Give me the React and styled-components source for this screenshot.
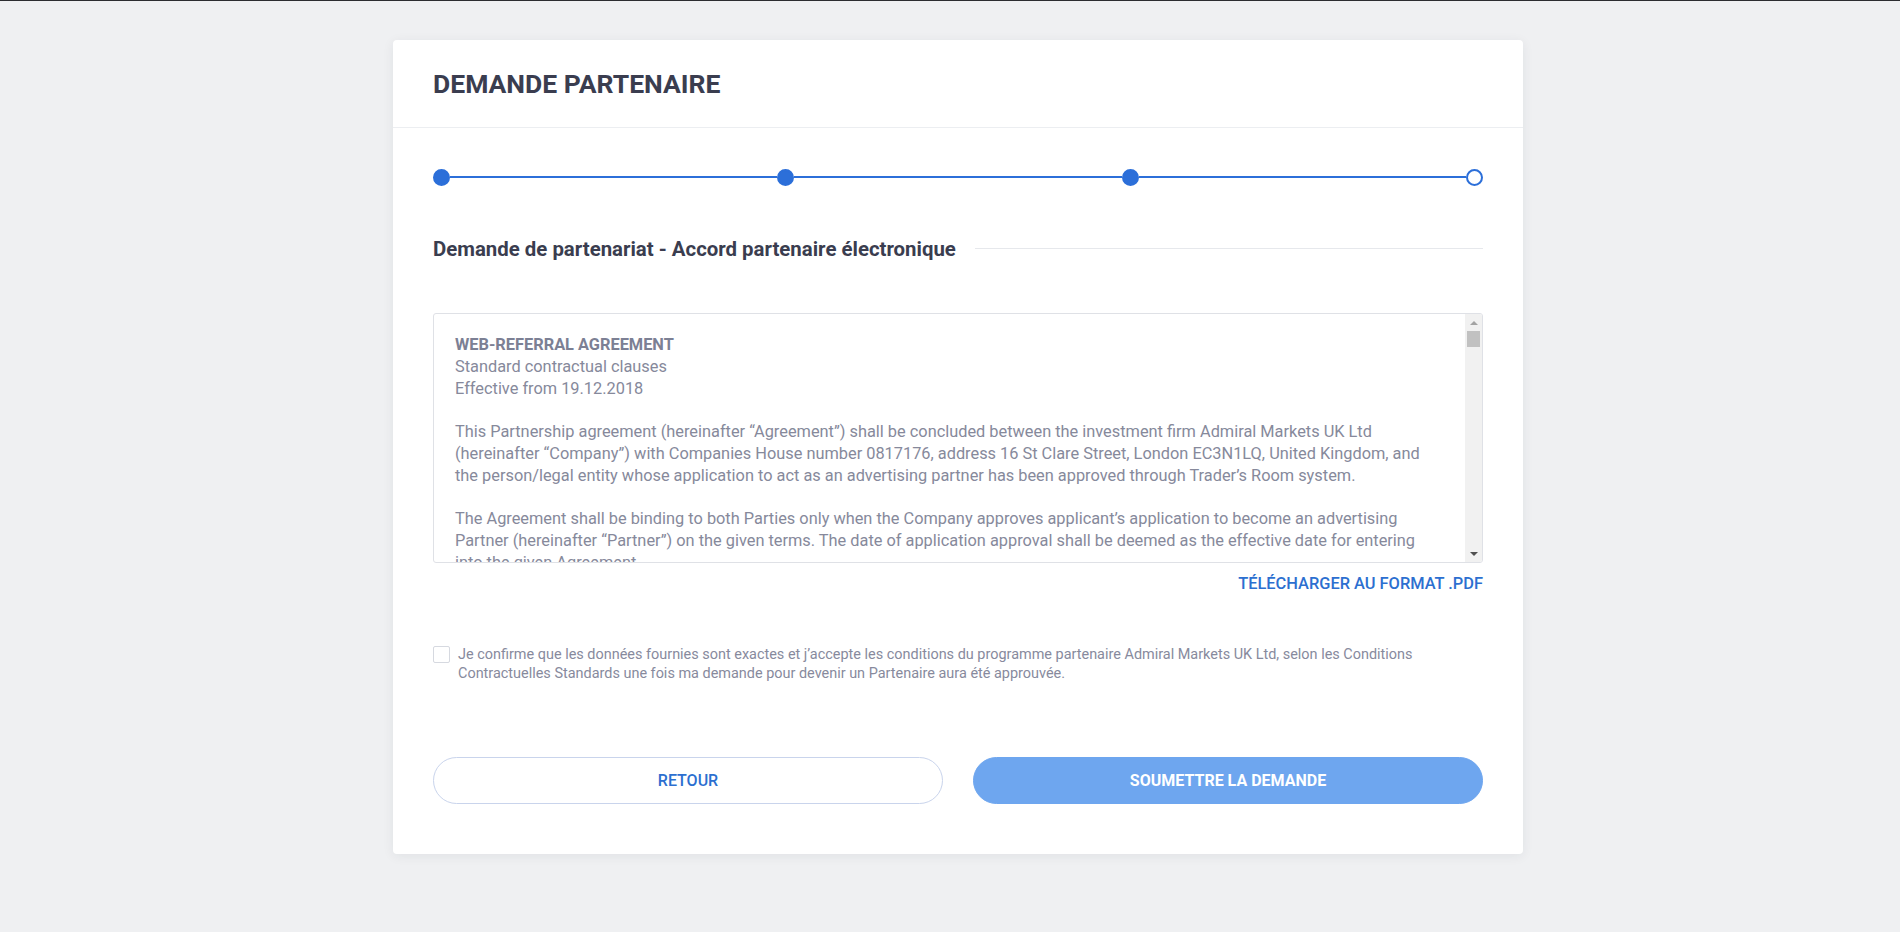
import React, { useEffect, useRef, useState } from "react";
import styled, { createGlobalStyle } from "styled-components";

const GlobalStyle = createGlobalStyle`
  html, body {
    margin: 0;
    padding: 0;
    background: #eff0f2;
    min-height: 100%;
  }
  body {
    font-family: Roboto, "Noto Sans", "Liberation Sans", sans-serif;
    -webkit-font-smoothing: antialiased;
  }
  * { box-sizing: border-box; }
`;

const TopRule = styled.div`
  height: 1px;
  background: #2c2d31;
`;

const Page = styled.main`
  display: flex;
  justify-content: center;
  padding: 39px 0 77px 16px;
`;

const Card = styled.section`
  width: 1130px;
  background: #ffffff;
  border-radius: 4px;
  box-shadow: 0 2px 12px rgba(30, 40, 60, 0.07);
`;

const CardHeader = styled.header`
  height: 88px;
  padding: 0 40px;
  display: flex;
  align-items: center;
  border-bottom: 1px solid #eceef1;
`;

const Title = styled.h1`
  margin: 0;
  font-size: 26.5px;
  font-weight: 700;
  line-height: 32px;
  color: #3a3d4f;
`;

const CardBody = styled.div`
  padding: 40px 40px 50px;
`;

const Stepper = styled.ol`
  list-style: none;
  margin: 0;
  padding: 0;
  height: 18px;
  display: flex;
  align-items: center;
`;

const Dot = styled.li`
  width: 17px;
  height: 17px;
  flex: none;
  border-radius: 50%;
  border: 2px solid #2c6fd9;
  background: ${(p) => (p.$done ? "#2c6fd9" : "#ffffff")};
`;

const Connector = styled.li`
  flex: 1;
  height: 2px;
  background: #2c6fd9;
`;

const SectionHeading = styled.div`
  margin-top: 51px;
  display: flex;
  align-items: center;
  gap: 19px;

  &::after {
    content: "";
    flex: 1;
    height: 1px;
    background: #e6e8ec;
    margin-top: -1px;
  }
`;

const HeadingText = styled.h2`
  margin: 0;
  font-size: 20.4px;
  font-weight: 700;
  line-height: 24px;
  color: #3a3d4f;
`;

const AgreementBox = styled.div`
  margin-top: 52px;
  height: 250px;
  display: flex;
  border: 1px solid #dfe1e6;
  border-radius: 3px;
  overflow: hidden;
`;

const AgreementScroll = styled.div`
  flex: 1;
  min-width: 0;
  overflow-y: scroll;
  scrollbar-width: none;
  padding: 20px 21px;
  font-size: 16.35px;
  line-height: 21.75px;
  color: #86899b;

  &::-webkit-scrollbar {
    display: none;
  }
`;

/* classic scrollbar rail drawn beside the text */
const ScrollRail = styled.div`
  width: 17px;
  flex: none;
  display: flex;
  flex-direction: column;
  background: #f1f1f1;
`;

const ArrowButton = styled.div`
  height: 17px;
  flex: none;
  display: flex;
  align-items: center;
  justify-content: center;

  &::before {
    content: "";
    width: 0;
    height: 0;
    border-left: 4px solid transparent;
    border-right: 4px solid transparent;
    ${(p) =>
      p.$dir === "up"
        ? `border-bottom: 4px solid ${p.$active ? "#505050" : "#a3a3a3"};`
        : `border-top: 4px solid ${p.$active ? "#505050" : "#a3a3a3"};`}
  }
`;

const Track = styled.div`
  flex: 1;
  position: relative;
`;

const Thumb = styled.div`
  position: absolute;
  left: 2px;
  right: 2px;
  height: 16px;
  background: #c1c1c1;
`;

const Lead = styled.div`
  margin-bottom: 21.75px;
`;

const AgreementTitle = styled.div`
  font-weight: 700;
  color: #7c8094;
`;

const Line = styled.div``;

const Clause = styled.p`
  margin: 0 0 21.75px;
`;

const ClauseTitle = styled.p`
  margin: 0;
  font-weight: 700;
  color: #7c8094;
`;

const PdfLink = styled.a`
  display: block;
  margin-top: 11px;
  text-align: right;
  font-size: 16.4px;
  font-weight: 500;
  line-height: 20px;
  color: #2c6fd0;
  text-decoration: none;
  cursor: pointer;
`;

const ConsentRow = styled.label`
  margin-top: 51px;
  display: flex;
  align-items: flex-start;
  gap: 8px;
  cursor: pointer;
`;

const Box = styled.span`
  width: 17px;
  height: 17px;
  flex: none;
  margin-top: 1px;
  border: 1px solid #d6d9e0;
  border-radius: 2px;
  background: #fff;
`;

const ConsentText = styled.span`
  font-size: 14.45px;
  line-height: 19px;
  color: #878a9d;
`;

const Actions = styled.div`
  margin-top: 74px;
  display: grid;
  grid-template-columns: 1fr 1fr;
  gap: 30px;
`;

const Button = styled.button`
  height: 47px;
  border-radius: 24px;
  font-family: inherit;
  font-size: 16px;
  font-weight: ${(p) => (p.$primary ? 700 : 500)};
  cursor: pointer;
  border: 1px solid ${(p) => (p.$primary ? "#6ea6ef" : "#c9d4ec")};
  background: ${(p) => (p.$primary ? "#6ea6ef" : "#ffffff")};
  color: ${(p) => (p.$primary ? "#ffffff" : "#2c6fd0")};
`;

const clauses = [
  {
    text: "This Partnership agreement (hereinafter “Agreement”) shall be concluded between the investment firm Admiral Markets UK Ltd (hereinafter “Company”) with Companies House number 0817176, address 16 St Clare Street, London EC3N1LQ, United Kingdom, and the person/legal entity whose application to act as an advertising partner has been approved through Trader’s Room system.",
  },
  {
    text: "The Agreement shall be binding to both Parties only when the Company approves applicant’s application to become an advertising Partner (hereinafter “Partner”) on the given terms. The date of application approval shall be deemed as the effective date for entering into the given Agreement.",
  },
  {
    title: "1. Subject of the Agreement",
    text: "1.1. The Partner undertakes to promote the Company’s services on the Partner’s website(s) and other online channels by placing advertising materials and referral links provided by the Company, and the Company undertakes to pay the Partner a remuneration for the clients referred in accordance with the terms set out in this Agreement.",
  },
  {
    text: "1.2. The Partner acts in its own name and on its own behalf. Nothing in this Agreement shall be construed as creating a partnership, joint venture, agency or employment relationship between the Parties.",
  },
  {
    title: "2. Rights and obligations of the Partner",
    text: "2.1. The Partner shall use only the advertising materials, banners and referral links made available in the Partner’s area of Trader’s Room and shall not alter them without the prior written consent of the Company.",
  },
  {
    text: "2.2. The Partner shall not present itself as a representative of the Company, shall not provide investment advice or portfolio management services to the referred clients and shall not accept any funds from the referred clients.",
  },
  {
    text: "2.3. The Partner shall comply with all applicable laws and regulations, including those related to financial promotions, consumer protection, personal data protection and electronic communications, in every jurisdiction where the advertising is made available.",
  },
  {
    text: "2.4. The Partner shall not use spam, unsolicited messages, misleading statements or any other unfair marketing practices, and shall not bid on the Company’s trademarks in paid search campaigns.",
  },
  {
    title: "3. Rights and obligations of the Company",
    text: "3.1. The Company shall provide the Partner with advertising materials, referral links and access to statistics on the referred clients in Trader’s Room.",
  },
  {
    text: "3.2. The Company shall have the right to refuse the opening of an account for any referred person at its sole discretion and without giving any reason.",
  },
  {
    text: "3.3. The Company shall have the right to review the Partner’s advertising activities at any time and to request the removal of any materials that do not comply with this Agreement or with applicable law.",
  },
  {
    title: "4. Remuneration",
    text: "4.1. The remuneration of the Partner shall be calculated on the basis of the trading activity of the referred clients according to the rates published in Trader’s Room on the date of the calculation.",
  },
  {
    text: "4.2. The remuneration shall be paid to the Partner’s account with the Company on a monthly basis. The Company shall not be obliged to pay remuneration for clients who were referred in breach of this Agreement.",
  },
  {
    text: "4.3. The Partner shall be solely responsible for the declaration and payment of any taxes arising from the remuneration received under this Agreement.",
  },
  {
    title: "5. Confidentiality and personal data",
    text: "5.1. The Parties shall keep confidential any information received in connection with this Agreement and shall not disclose it to third parties, except where such disclosure is required by law.",
  },
  {
    text: "5.2. The Partner shall process the personal data of the referred clients only to the extent necessary for the performance of this Agreement and in accordance with applicable data protection legislation.",
  },
  {
    title: "6. Liability",
    text: "6.1. The Partner shall indemnify the Company for any loss, damage, claim or expense arising from the Partner’s breach of this Agreement or of applicable law.",
  },
  {
    text: "6.2. The Company shall not be liable for any indirect or consequential loss suffered by the Partner, including loss of profit or loss of business opportunity.",
  },
  {
    title: "7. Term and termination",
    text: "7.1. This Agreement is concluded for an indefinite term. Either Party may terminate the Agreement at any time by notifying the other Party through Trader’s Room or by e-mail.",
  },
  {
    text: "7.2. The Company may terminate the Agreement with immediate effect if the Partner breaches any of its obligations. In such case the Company shall have the right to withhold any unpaid remuneration.",
  },
  {
    title: "8. Final provisions",
    text: "8.1. The Company may amend the terms of this Agreement unilaterally by publishing the amended terms in Trader’s Room. The amendments shall enter into force on the date stated in the notice.",
  },
  {
    text: "8.2. This Agreement shall be governed by the laws of England and Wales. Any disputes arising from this Agreement shall be settled by the courts of England and Wales.",
  },
];

const THUMB = 16;

function AgreementViewer() {
  const scrollRef = useRef(null);
  const trackRef = useRef(null);
  const [state, setState] = useState({ top: 0, atTop: true, atEnd: false });

  const sync = () => {
    const el = scrollRef.current;
    const track = trackRef.current;
    if (!el || !track) return;
    const max = el.scrollHeight - el.clientHeight;
    const ratio = max > 0 ? el.scrollTop / max : 0;
    setState({
      top: Math.round((track.clientHeight - THUMB) * ratio),
      atTop: el.scrollTop <= 0,
      atEnd: el.scrollTop >= max - 1,
    });
  };

  useEffect(sync, []);

  return (
    <AgreementBox>
      <AgreementScroll ref={scrollRef} onScroll={sync}>
        <Lead>
          <AgreementTitle>WEB-REFERRAL AGREEMENT</AgreementTitle>
          <Line>Standard contractual clauses</Line>
          <Line>Effective from 19.12.2018</Line>
        </Lead>
        {clauses.map((c, i) => (
          <React.Fragment key={i}>
            {c.title && <ClauseTitle>{c.title}</ClauseTitle>}
            <Clause>{c.text}</Clause>
          </React.Fragment>
        ))}
      </AgreementScroll>
      <ScrollRail>
        <ArrowButton $dir="up" $active={!state.atTop} />
        <Track ref={trackRef}>
          <Thumb style={{ top: state.top }} />
        </Track>
        <ArrowButton $dir="down" $active={!state.atEnd} />
      </ScrollRail>
    </AgreementBox>
  );
}

export default function App() {
  return (
    <>
      <GlobalStyle />
      <TopRule />
      <Page>
        <Card>
          <CardHeader>
            <Title>DEMANDE PARTENAIRE</Title>
          </CardHeader>
          <CardBody>
            <Stepper>
              <Dot $done />
              <Connector />
              <Dot $done />
              <Connector />
              <Dot $done />
              <Connector />
              <Dot />
            </Stepper>

            <SectionHeading>
              <HeadingText>
                Demande de partenariat - Accord partenaire électronique
              </HeadingText>
            </SectionHeading>

            <AgreementViewer />

            <PdfLink>TÉLÉCHARGER AU FORMAT .PDF</PdfLink>

            <ConsentRow>
              <Box />
              <ConsentText>
                Je confirme que les données fournies sont exactes et j’accepte
                les conditions du programme partenaire Admiral Markets UK Ltd,
                selon les Conditions Contractuelles Standards une fois ma
                demande pour devenir un Partenaire aura été approuvée.
              </ConsentText>
            </ConsentRow>

            <Actions>
              <Button type="button">RETOUR</Button>
              <Button type="button" $primary>
                SOUMETTRE LA DEMANDE
              </Button>
            </Actions>
          </CardBody>
        </Card>
      </Page>
    </>
  );
}
